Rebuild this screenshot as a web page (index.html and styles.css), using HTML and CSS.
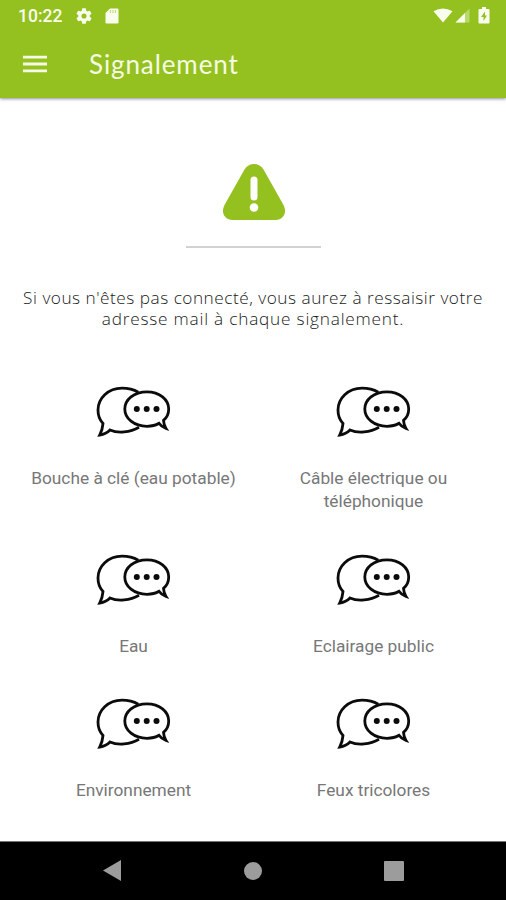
FILE: index.html
```html
<!DOCTYPE html>
<html lang="fr">
<head>
<meta charset="utf-8">
<title>Signalement</title>
<link rel="stylesheet" href="styles.css">
</head>
<body>
<svg class="defs" width="0" height="0">
  <symbol id="chat" viewBox="0 0 76 52">
    <g fill="none" stroke="#0b0b0b" stroke-width="2.8" stroke-linejoin="miter">
      <path d="M42.3 6.2C36 2.6 30 2.2 26 2.2C12 2.2 2 12.5 2 24C2 29.5 3.700 34 7 37.500Q6.400 44 3.800 49Q10 48 14 44C22 47.500 34 46.500 43 41.200"/>
      <path d="M63 37.300C59.500 39.500 55.500 40.300 51 40.300C38 40.300 28.800 32.500 28.800 23C28.800 13.500 38 5.800 51 5.800C63.500 5.800 72.700 13.500 72.700 23C72.700 28 71 31.500 67.500 34.400Q67.800 39 70 42.500Q65.500 41 63 37.300Z"/>
    </g>
    <g fill="#0b0b0b"><circle cx="40.800" cy="23" r="3"/><circle cx="50.700" cy="23" r="3"/><circle cx="60.500" cy="23" r="3"/></g>
  </symbol>
</svg>
<div class="screen">
  <header class="top">
    <div class="status">
      <span class="time">10:22</span>
      <svg class="gear" width="16" height="16" viewBox="2 2 20 20"><path fill="#f9fdee" d="M19.14 12.94c.04-.3.06-.61.06-.94s-.02-.64-.07-.94l2.030-1.580a.49.49 0 0 0 .12-.61l-1.920-3.320a.49.49 0 0 0-.59-.22l-2.390.96a7 7 0 0 0-1.620-.94l-.36-2.540a.48.48 0 0 0-.48-.41h-3.840a.48.48 0 0 0-.47.41l-.36 2.540a7.300 7.300 0 0 0-1.620.94l-2.390-.96a.48.48 0 0 0-.59.22L2.740 8.870a.47.47 0 0 0 .12.61l2.030 1.580a6 6 0 0 0 0 1.880l-2.030 1.580a.49.49 0 0 0-.12.61l1.920 3.320c.12.22.37.29.59.22l2.390-.96c.5.38 1.030.7 1.620.94l.36 2.540c.05.24.24.41.48.41h3.840c.24 0 .44-.17.47-.41l.36-2.540a7.300 7.300 0 0 0 1.620-.94l2.390.96c.22.08.47 0 .59-.22l1.920-3.320a.47.47 0 0 0-.12-.61zM12 15.200A3.200 3.200 0 1 1 12 8.800a3.200 3.200 0 0 1 0 6.400z"/></svg>
      <svg class="card" width="14" height="16" viewBox="0 0 14 16"><path fill="#f9fdee" d="M5 .5h7.200Q13.500.5 13.500 1.800v12.400q0 1.300-1.300 1.300H1.800Q.5 15.500.5 14.200V5z"/><path stroke="#c4df80" stroke-width="1.200" d="M5.500 2v3M8 2v3M10.500 2v3"/></svg>
      <span class="spacer"></span>
      <svg width="58" height="18" viewBox="0 0 58 18">
        <path fill="#f9fdee" d="M.5 4.200Q10 -1.400 19.500 4.200L10 15.500z"/>
        <path fill="#b9d96a" d="M36.500 1.500V15.500H22.500z"/>
        <path fill="#f9fdee" d="M32 6v9.500h-9.500z"/>
        <path fill="#f9fdee" d="M49 0h4v2h2.500q1 0 1 1v12.500q0 1-1 1h-9q-1 0-1-1V3q0-1 1-1H49z"/>
        <path fill="#94c11f" d="M52 4.500l-4 5.500h2.500v4l3.500-5.500h-2z"/>
      </svg>
    </div>
    <div class="bar">
      <svg width="24" height="18" viewBox="0 0 24 18"><path stroke="#f5fbe5" stroke-width="2.800" d="M0 2.200h24M0 9h24M0 15.800h24"/></svg>
      <h1>Signalement</h1>
    </div>
  </header>
  <main>
    <svg class="warn" width="62" height="56" viewBox="0 0 62 56"><path fill="#94c11f" d="M21.500 5.500Q25 0 31 0T40.500 5.500L60.500 41Q63.500 47 60.800 51.500Q58 56 52 56H10Q4 56 1.200 51.500Q-1.500 47 1.500 41z"/><path stroke="#fff" stroke-width="7" stroke-linecap="round" d="M31 16v17"/><circle cx="31" cy="43.500" r="4.300" fill="#fff"/></svg>
    <div class="rule"></div>
    <p class="message"><span class="l1">Si vous n'êtes pas connecté, vous aurez à ressaisir votre</span><br><span class="l2">adresse mail à chaque signalement.</span></p>
    <div class="grid">
      <div class="item"><svg><use href="#chat"/></svg><span>Bouche à clé (eau potable)</span></div>
      <div class="item"><svg><use href="#chat"/></svg><span>Câble électrique ou<br>téléphonique</span></div>
      <div class="item"><svg><use href="#chat"/></svg><span>Eau</span></div>
      <div class="item"><svg><use href="#chat"/></svg><span>Eclairage public</span></div>
      <div class="item"><svg><use href="#chat"/></svg><span>Environnement</span></div>
      <div class="item"><svg><use href="#chat"/></svg><span>Feux tricolores</span></div>
    </div>
  </main>
  <nav>
    <svg width="18" height="21" viewBox="0 0 18 21"><path fill="#9c9c9c" d="M0 10.500L18 0v21z"/></svg>
    <svg width="18" height="18" viewBox="0 0 18 18"><circle cx="9" cy="9" r="9" fill="#9c9c9c"/></svg>
    <svg width="20" height="20" viewBox="0 0 20 20"><rect width="20" height="20" rx="1" fill="#9c9c9c"/></svg>
  </nav>
</div>
</body>
</html>
```
FILE: styles.css
```css
* { box-sizing: border-box; }
body { margin: 0; background: #fff; font-family: Roboto, sans-serif; }
svg { display: block; flex: none; }
.defs { display: none; }
.screen { height: 900px; display: flex; flex-direction: column; overflow: hidden; }
.top { height: 98px; flex: none; background: #94c11f; box-shadow: 0 1px 3px rgba(60, 50, 80, .55); }
.status { height: 32px; padding: 0 15px 0 18px; display: flex; align-items: center; color: #f9fdee; }
.time { width: 44px; font-size: 17.5px; font-weight: 500; white-space: nowrap; }
.gear { margin-left: 14px; }
.card { margin-left: 13px; }
.spacer { flex: 1; }
.bar { height: 66px; padding: 0 0 2px 23px; display: flex; align-items: center; }
h1 { margin: 0 0 0 42px; font: 400 26px/32px Lato, sans-serif; color: #f5fbe5; letter-spacing: .9px; white-space: nowrap; }
main { flex: 1; display: flex; flex-direction: column; align-items: center; }
.warn { margin: 66px 0 0 1px; }
.rule { width: 135px; height: 2px; margin-top: 26px; background: #d2d2d2; }
.message { margin: 39px 0 0; font: 300 17.2px/21px "Open Sans", sans-serif; color: #1a1a1a; text-align: center; white-space: nowrap; }
.l1 { letter-spacing: .52px; }
.l2 { letter-spacing: .8px; }
.grid { width: 480px; margin: 57px 0 0 1px; display: grid; grid-template-columns: 1fr 1fr; row-gap: 40.5px; }
.item { display: flex; flex-direction: column; align-items: center; }
.item svg { width: 76px; height: 52px; }
.item span { margin-top: 29px; font-size: 17.3px; line-height: 23px; color: #777; text-align: center; white-space: nowrap; }
nav { height: 59px; flex: none; background: #000; border-top: 1px solid #777; padding: 0 102px 1px 103px; display: flex; align-items: center; justify-content: space-between; }
```
